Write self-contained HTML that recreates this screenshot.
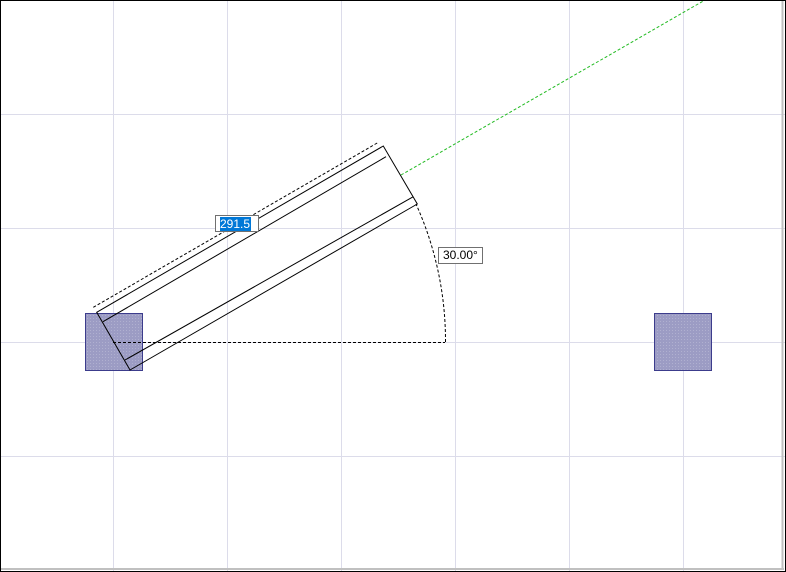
<!DOCTYPE html>
<html><head><style>
html,body{margin:0;padding:0;background:#fff;}
body{width:786px;height:572px;overflow:hidden;position:relative;}
svg{position:absolute;left:0;top:0;}
.lbl{position:absolute;background:#fff;border:1px solid #707070;font:12px "Liberation Sans",sans-serif;color:#000;box-sizing:border-box;line-height:15px;}
</style></head><body>
<svg width="786" height="572" viewBox="0 0 786 572">
<defs><pattern id="h" width="3" height="3" patternUnits="userSpaceOnUse"><rect width="3" height="3" fill="#9c9cc4"/><rect x="0" y="0" width="1" height="1" fill="#b0b0d0"/></pattern></defs>
<g stroke="#dcdcea" stroke-width="1">
<line x1="113.5" y1="0" x2="113.5" y2="572"/><line x1="227.5" y1="0" x2="227.5" y2="572"/><line x1="341.5" y1="0" x2="341.5" y2="572"/><line x1="455.5" y1="0" x2="455.5" y2="572"/><line x1="569.5" y1="0" x2="569.5" y2="572"/><line x1="683.5" y1="0" x2="683.5" y2="572"/>
<line x1="0" y1="114.5" x2="786" y2="114.5"/><line x1="0" y1="228.5" x2="786" y2="228.5"/><line x1="0" y1="342.5" x2="786" y2="342.5"/><line x1="0" y1="456.5" x2="786" y2="456.5"/>
</g>
<rect x="85.5" y="313.5" width="57" height="57" fill="url(#h)" stroke="#3c3c8c"/>
<rect x="654.5" y="313.5" width="57" height="57" fill="url(#h)" stroke="#3c3c8c"/>
<g fill="none" stroke="#000" stroke-width="1">
<polygon points="96.7,312.3 383.3,146 417.3,204 130,370"/>
<line x1="103" y1="321.7" x2="386" y2="156.7"/>
<line x1="125" y1="360" x2="413.3" y2="196.7"/>
<g stroke-dasharray="3,2">
<line x1="93.3" y1="307.3" x2="377.7" y2="142.7"/>
<line x1="113" y1="342.5" x2="445" y2="342.5"/>
<path d="M445.5,342 A333,333 0 0 0 416,204"/>
</g>
</g>
<line x1="401" y1="175" x2="705" y2="0" stroke="#22bb22" stroke-dasharray="3,2"/>
<rect x="0.5" y="0.5" width="785" height="571" fill="none" stroke="#000"/>
<line x1="782.5" y1="1" x2="782.5" y2="570" stroke="#c0c0c0" stroke-width="2"/>
<line x1="1" y1="569" x2="784" y2="569" stroke="#c0c0c0" stroke-width="2"/>
</svg>
<div class="lbl" style="left:215px;top:215px;width:44px;height:17px;"><span style="position:absolute;left:4px;top:1px;height:14px;padding-right:1px;background:#0078d7;color:#fff;line-height:14px;white-space:nowrap;">291.5</span></div>
<div class="lbl" style="left:438px;top:247px;width:45px;height:17px;padding-left:4px;">30.00°</div>
</body></html>
